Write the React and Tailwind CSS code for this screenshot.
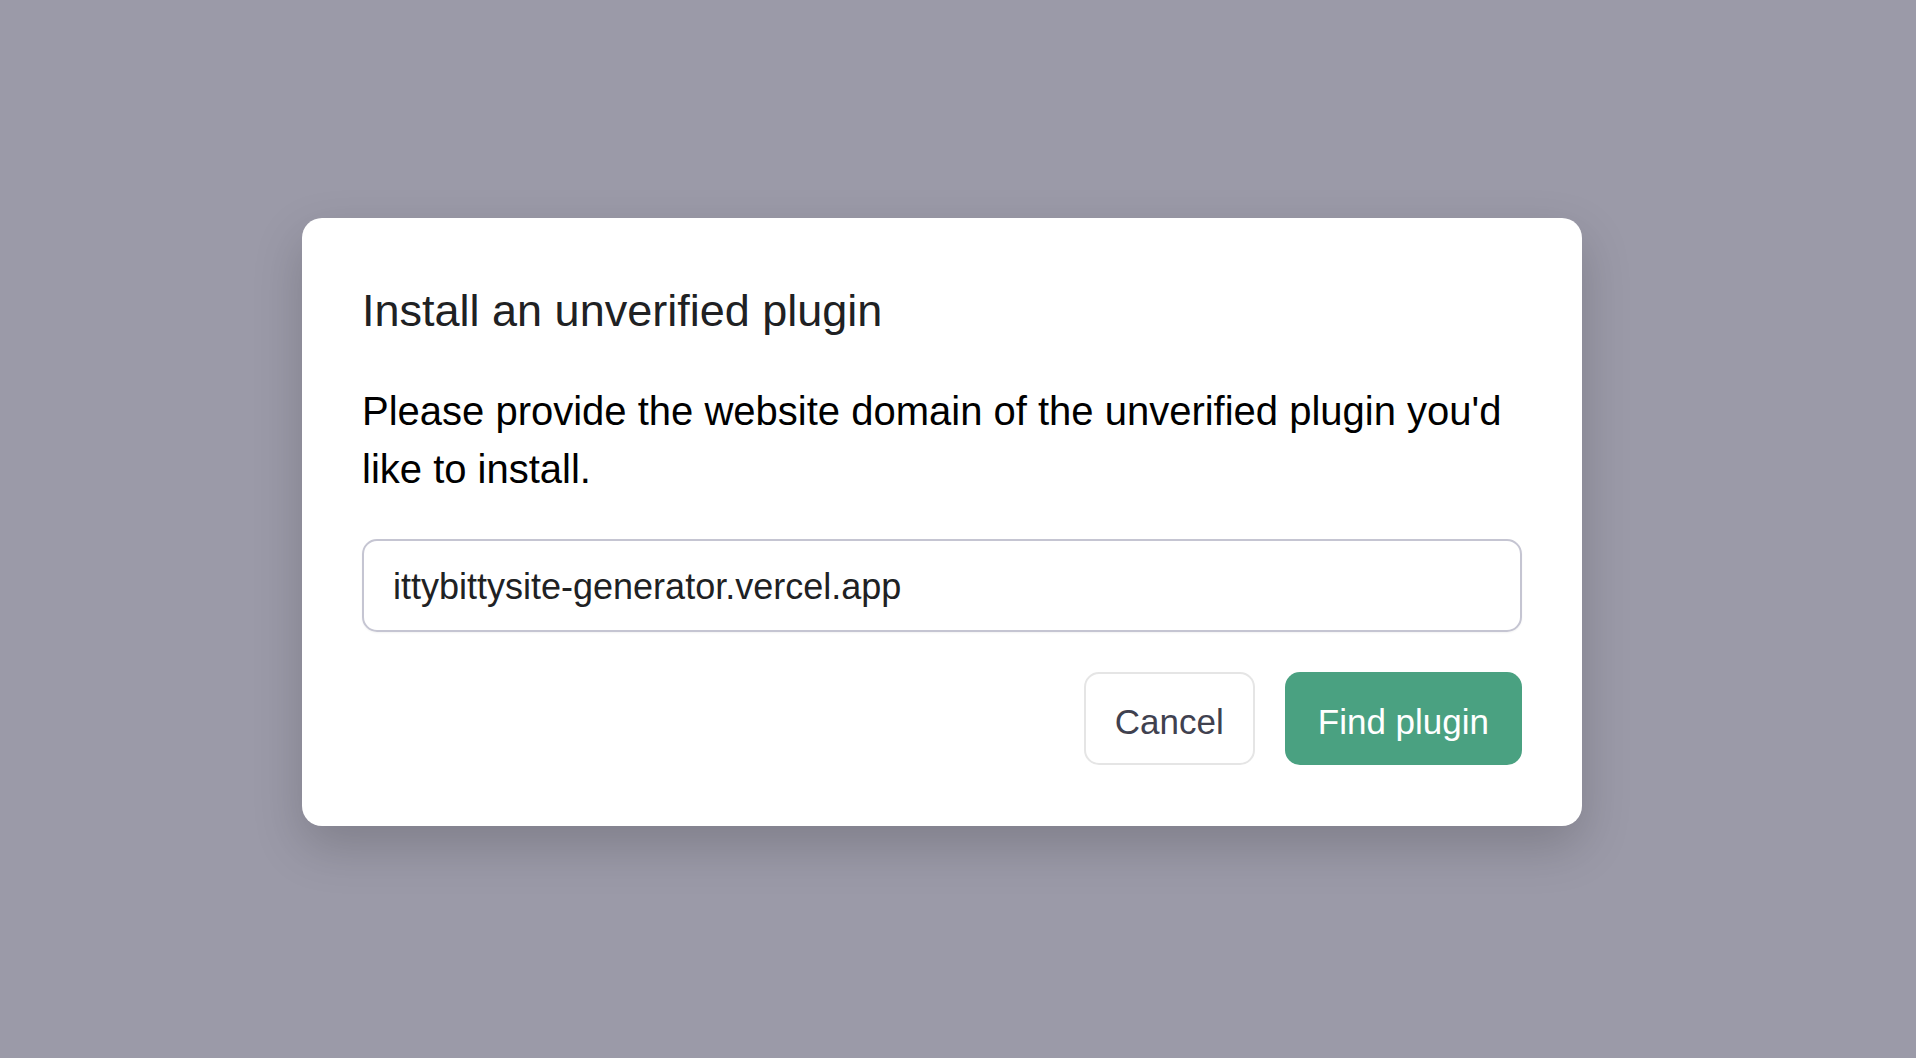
import React, { useState } from 'react';

export default function App() {
  const [domain, setDomain] = useState('ittybittysite-generator.vercel.app');

  return (
    <div
      className="min-h-screen w-full bg-[#9b9aa8] flex justify-center pr-[32px] pt-[218px]"
      style={{ fontFamily: '"Liberation Sans", Arial, sans-serif' }}
    >
      <div className="w-[1280px] h-[608px] bg-white rounded-[20px] shadow-[0_20px_50px_rgba(0,0,0,0.18)] px-[60px] pt-[61px] pb-[61px] flex flex-col">
        <h2 className="text-[45px] leading-[64px] text-[#202123]">Install an unverified plugin</h2>

        <p className="mt-[39px] text-[40px] leading-[58px] text-black">
          Please provide the website domain of the unverified plugin you'd like to install.
        </p>

        <input
          value={domain}
          onChange={(e) => setDomain(e.target.value)}
          className="mt-[41px] h-[93px] w-full rounded-[15px] border-2 border-[#c5c5d2] px-[29px] pt-[2px] text-[36px] text-[#202123] outline-none shadow-[0_1px_2px_rgba(0,0,0,0.05)]"
        />

        <div className="mt-[40px] flex justify-end gap-[30px]">
          <button className="h-[93px] rounded-[15px] border-2 border-[#e5e5e5] bg-white px-[29px] pt-[7px] text-[35px] text-[#40414f]">
            Cancel
          </button>
          <button className="h-[93px] rounded-[15px] border-2 border-transparent bg-[#4aa181] px-[31px] pt-[7px] text-[35px] text-white">
            Find plugin
          </button>
        </div>
      </div>
    </div>
  );
}
